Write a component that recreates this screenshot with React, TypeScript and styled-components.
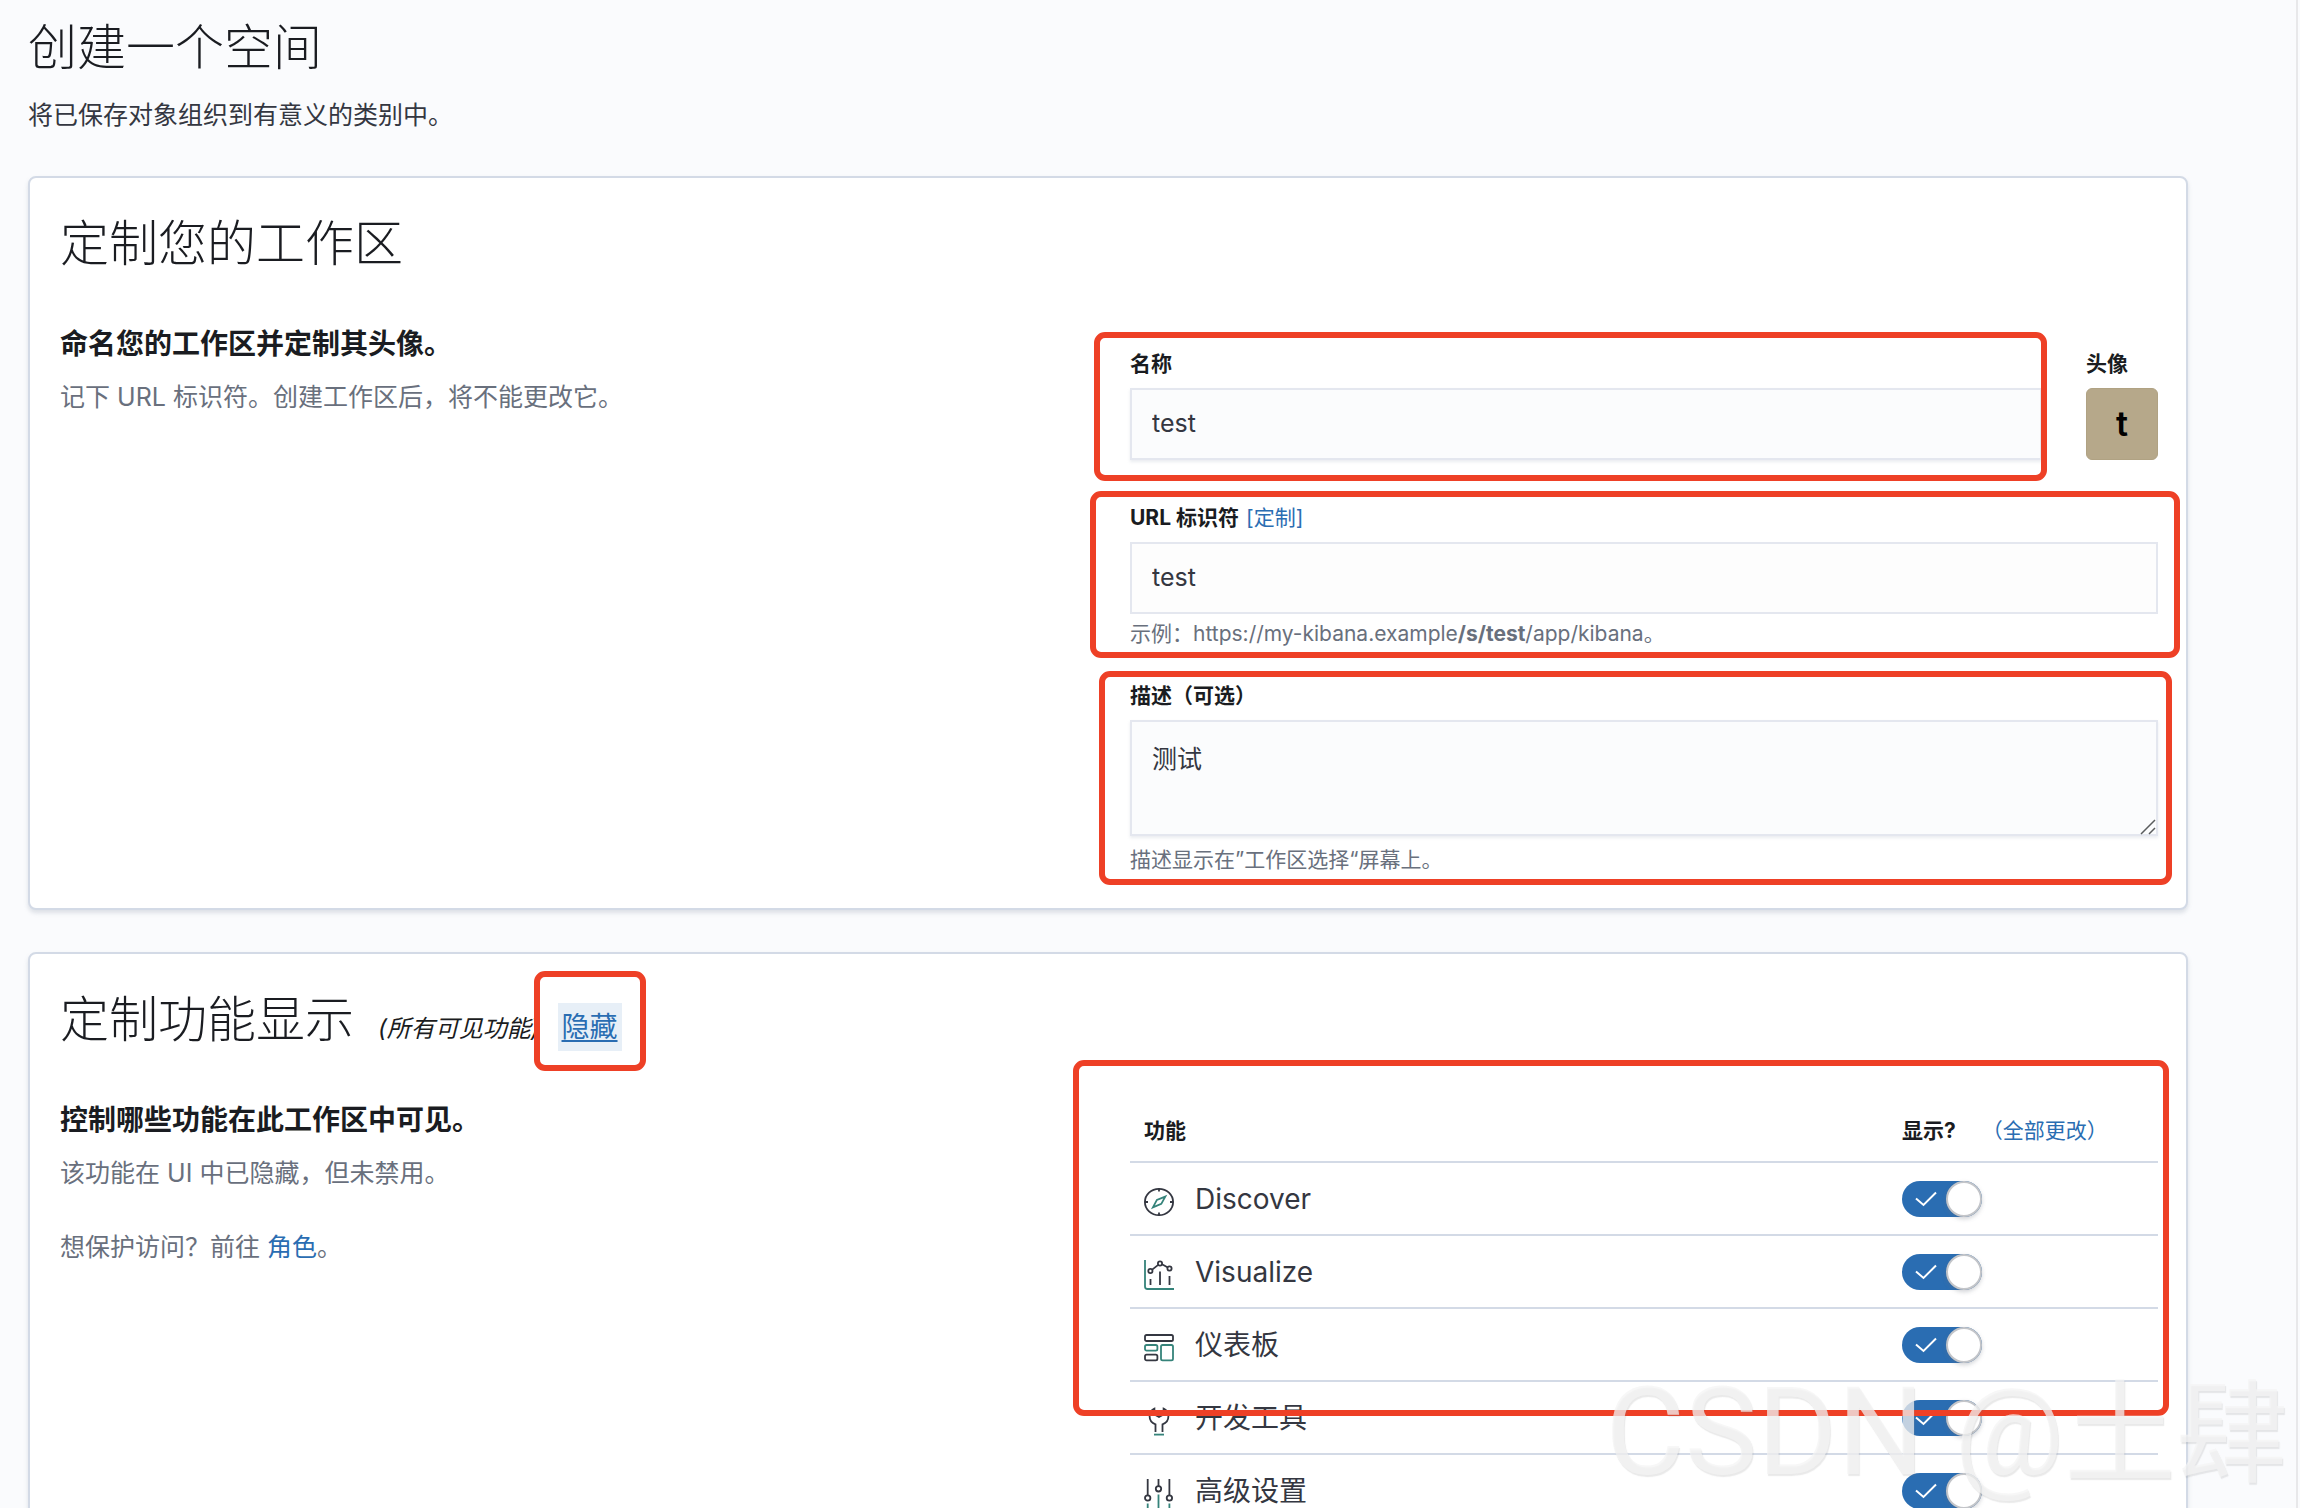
import React, { useId, useState } from 'react';
import styled, { createGlobalStyle, css } from 'styled-components';

const ink = '#1a1c21';
const text = '#343741';
const subdued = '#69707d';
const link = '#2a6db2';
const line = '#d3dae6';
const green = '#35837a';
const red = '#ee4026';

const GlobalStyle = createGlobalStyle`
  * { box-sizing: border-box; }
  body {
    margin: 0;
    background: #fafbfd;
    color: ${text};
    font-family: Inter, 'Noto Sans CJK SC', sans-serif;
    font-size: 25px;
    line-height: 38px;
  }
  h1, h2, h3, p { margin: 0; }
`;

const Page = styled.main`
  position: relative;
  height: 100vh;
  overflow: hidden;
  margin-right: 2px;
  padding: 14px 108px 0 28px;
  border-right: 2px solid #e8e8ea;
`;

const thin = css`
  color: ${ink};
  font-family: 'Noto Sans CJK SC', sans-serif;
  font-size: 49px;
  font-weight: 300;
  line-height: 60px;
`;

const PageTitle = styled.h1`${thin}`;

const Intro = styled.p`
  margin-top: 22px;
`;

const Panel = styled.section`
  margin-top: 42px;
  padding: 32px 28px 34px 30px;
  background: #fff;
  border: 2px solid ${line};
  border-radius: 8px;
  box-shadow: 0 3px 4px rgba(152, 162, 179, 0.3);
`;

const PanelHeader = styled.header`
  display: flex;
  align-items: baseline;
  height: 60px;
  margin-bottom: 54px;
`;

const PanelTitle = styled.h2`${thin}`;

const Summary = styled.em`
  margin-left: 24px;
  color: ${ink};
  font-size: 24px;
`;

const Columns = styled.div`
  display: grid;
  grid-template-columns: minmax(0, 1fr) minmax(0, 1fr);
  gap: 42px;
`;

const SideTitle = styled.h3`
  color: ${ink};
  font-size: 28px;
  font-weight: 700;
  line-height: 40px;
`;

const Note = styled.p<{ $gap: number }>`
  margin-top: ${(p) => p.$gap}px;
  color: ${subdued};
`;

const Anchor = styled.a`
  color: ${link};
  text-decoration: none;
`;

const Form = styled.form`
  display: flex;
  flex-direction: column;
  gap: 34px;
  padding-top: 26px;
`;

const NameRow = styled.div`
  display: flex;
  gap: 44px;
  padding-bottom: 10px;
`;

const Marked = styled.div`
  position: relative;
  flex: 1;
  min-width: 0;
`;

const Mark = styled.span<{ $inset: string }>`
  position: absolute;
  z-index: 1;
  inset: ${(p) => p.$inset};
  border: 6px solid ${red};
  border-radius: 11px;
  pointer-events: none;
`;

const labelText = css`
  color: ${ink};
  font-size: 21px;
  font-weight: 700;
  line-height: 28px;
`;

const LabelRow = styled.div`
  ${labelText}
  display: flex;
  gap: 7px;
  margin-bottom: 10px;
`;

const TextButton = styled.button`
  padding: 0;
  border: 0;
  background: none;
  color: ${link};
  font: inherit;
  font-weight: 400;
  cursor: pointer;
`;

const HideButton = styled(TextButton)`
  padding: 0 4px;
  background: #e7eff7;
  font-size: 28px;
  line-height: 48px;
  text-decoration: underline;
  text-underline-offset: 3px;
`;

const HideSlot = styled.span`
  position: relative;
  margin-left: 18px;
`;

const control = css`
  display: block;
  width: 100%;
  padding: 0 20px 2px;
  border: 2px solid #e4e7ef;
  border-radius: 0;
  outline: 0;
  color: ${text};
  font: inherit;
`;

const Input = styled.input`
  ${control}
  height: 72px;
  background: #fbfcfd;
  box-shadow: 0 2px 3px rgba(152, 162, 179, 0.2);
  &:read-only {
    background: #fdfdfd;
    box-shadow: none;
  }
`;

const Area = styled.textarea`
  ${control}
  height: 116px;
  padding-top: 18px;
  background: #fbfcfd;
  box-shadow: 0 2px 3px rgba(152, 162, 179, 0.2);
  resize: none;
`;

const AreaBox = styled.div`
  position: relative;
  margin-bottom: 10px;
`;

const Grip = styled.svg`
  position: absolute;
  right: 2px;
  bottom: 1px;
`;

const Help = styled.p`
  margin-top: 6px;
  color: ${subdued};
  font-size: 21px;
  line-height: 28px;
`;

const Avatar = styled.div`
  display: grid;
  place-items: center;
  width: 72px;
  height: 72px;
  border: 1px solid #b0a283;
  border-radius: 6px;
  background: #b6a88a;
  color: #000;
  font-size: 34px;
  font-weight: 600;
`;

const TableBox = styled(Marked)`
  align-self: start;
`;

const Table = styled.table`
  width: 100%;
  border-spacing: 0;
  table-layout: fixed;
`;

const Head = styled.th<{ $width?: string }>`
  ${labelText}
  width: ${(p) => p.$width ?? 'auto'};
  height: 63px;
  padding: 0 14px;
  border-bottom: 2px solid ${line};
  text-align: left;
`;

const HeadLine = styled.div`
  display: flex;
  gap: 26px;
`;

const Cell = styled.td`
  height: 73px;
  padding: 0 14px;
  border-bottom: 2px solid ${line};
`;

const Feature = styled.label`
  display: flex;
  align-items: center;
  gap: 21px;
  font-size: 28px;
`;

const Icon = styled.svg`
  flex: none;
  width: 30px;
  height: 36px;
  padding-top: 6px;
  fill: none;
  stroke: ${text};
  stroke-width: 1.8;
`;

const SwitchBox = styled.span`
  display: grid;
  align-items: center;
  width: 80px;
  height: 36px;
  & > * { grid-area: 1 / 1; }
`;

const SwitchInput = styled.input`
  appearance: none;
  width: 80px;
  height: 36px;
  margin: 0;
  border-radius: 18px;
  background: ${subdued};
  &:checked { background: ${link}; }
`;

const Tick = styled.svg`
  margin-left: 13px;
  pointer-events: none;
`;

const Thumb = styled.span<{ $on: boolean }>`
  justify-self: ${(p) => (p.$on ? 'end' : 'start')};
  width: 36px;
  height: 36px;
  border: 2px solid #c3c5c9;
  border-radius: 50%;
  background: #fff;
  box-shadow: 0 2px 4px rgba(105, 112, 125, 0.3);
  pointer-events: none;
`;

const Watermark = styled.div`
  position: absolute;
  z-index: 2;
  right: 8px;
  bottom: 0;
  color: rgba(244, 244, 244, 0.74);
  font-family: Roboto, 'Noto Sans CJK SC', sans-serif;
  font-size: 122px;
  line-height: 144px;
  white-space: nowrap;
  text-shadow: 1px 2px 1px rgba(120, 120, 120, 0.16);
  pointer-events: none;
`;

const WatermarkName = styled.span`
  font-size: 112px;
`;

const icons: Record<string, React.ReactNode> = {
  discover: (
    <>
      <ellipse cx="15" cy="15" rx="14.1" ry="13.2" />
      <path d="M15 1.5v3M15 25.5v3M1 15h3M26 15h3" />
      <path stroke={green} d="M21.3 9.6 17.3 16.9 8.9 20.4 12.9 12.9z" />
    </>
  ),
  visualize: (
    <>
      <path stroke={green} d="M1 0v26.5Q1 29 3.5 29H30" />
      <path d="M6.5 19v6M16 11.5v13.5M25.5 16v9M8.2 9.6 14.2 4.9M18 4.3 23.4 7.3" />
      <circle cx="6.4" cy="11" r="2.1" />
      <circle cx="16" cy="3.5" r="2.1" />
      <circle cx="25.5" cy="8.5" r="2.1" />
    </>
  ),
  dashboard: (
    <>
      <rect x="1" y="2" width="28" height="6" rx="1.6" />
      <rect x="1" y="21.7" width="12.4" height="5.6" rx="1.6" />
      <rect stroke={green} x="1" y="12" width="12.4" height="5.6" rx="1.6" />
      <rect stroke={green} x="17" y="12" width="12" height="15.3" rx="1.6" />
    </>
  ),
  devtools: (
    <>
      <path d="M11.5 26V18.3C7.6 16.9 5.6 13.8 5.6 10.2 5.6 7 7.2 4.1 10.4 2.6V8.4L15 11 19.6 8.4V2.6C22.8 4.1 24.4 7 24.4 10.2 24.4 13.8 22.4 16.9 18.5 18.3V26" />
      <path stroke={green} d="M10 28.6H20" />
    </>
  ),
  settings: (
    <>
      <path d="M3.7 0v16.2M14.5 0v7M25.4 0v16.2" />
      <circle cx="3.7" cy="19" r="2.7" />
      <circle cx="14.5" cy="9.8" r="2.7" />
      <circle cx="25.4" cy="19" r="2.7" />
      <path stroke={green} d="M3.7 24.5V30M14.5 15.5V30M25.4 24.5V30" />
    </>
  ),
};

const features = [
  { icon: 'discover', name: 'Discover' },
  { icon: 'visualize', name: 'Visualize' },
  { icon: 'dashboard', name: '仪表板' },
  { icon: 'devtools', name: '开发工具' },
  { icon: 'settings', name: '高级设置' },
];

function FeatureRow({ icon, name }: { icon: string; name: string }) {
  const id = useId();
  const [on, setOn] = useState(true);
  return (
    <tr>
      <Cell>
        <Feature htmlFor={id}>
          <Icon viewBox="0 0 30 30" aria-hidden="true">{icons[icon]}</Icon>
          {name}
        </Feature>
      </Cell>
      <Cell>
        <SwitchBox>
          <SwitchInput
            id={id}
            type="checkbox"
            role="switch"
            checked={on}
            onChange={(e) => setOn(e.target.checked)}
          />
          {on && (
            <Tick width="22" height="16" viewBox="0 0 22 16" fill="none" stroke="#fff" strokeWidth="2" aria-hidden="true">
              <path d="M1 7.5 8.5 14 21 1.5" />
            </Tick>
          )}
          <Thumb $on={on} />
        </SwitchBox>
      </Cell>
    </tr>
  );
}

export default function App() {
  return (
    <>
      <GlobalStyle />
      <Page lang="zh-CN">
        <PageTitle>创建一个空间</PageTitle>
        <Intro>将已保存对象组织到有意义的类别中。</Intro>

        <Panel>
          <PanelHeader>
            <PanelTitle>定制您的工作区</PanelTitle>
          </PanelHeader>
          <Columns>
            <div>
              <SideTitle>命名您的工作区并定制其头像。</SideTitle>
              <Note $gap={14}>记下 URL 标识符。创建工作区后，将不能更改它。</Note>
            </div>
            <Form>
              <NameRow>
                <Marked>
                  <LabelRow><label htmlFor="name">名称</label></LabelRow>
                  <Input id="name" defaultValue="test" />
                  <Mark $inset="-18px -5px -21px -36px" />
                </Marked>
                <div>
                  <LabelRow>头像</LabelRow>
                  <Avatar>t</Avatar>
                </div>
              </NameRow>
              <Marked>
                <LabelRow>
                  <label htmlFor="identifier">URL 标识符</label>
                  <TextButton type="button">[定制]</TextButton>
                </LabelRow>
                <Input id="identifier" defaultValue="test" readOnly />
                <Help>
                  示例：https://my-kibana.example<strong>/s/test</strong>/app/kibana。
                </Help>
                <Mark $inset="-13px -22px -10px -40px" />
              </Marked>
              <Marked>
                <LabelRow><label htmlFor="description">描述（可选）</label></LabelRow>
                <AreaBox>
                  <Area id="description" defaultValue="测试" />
                  <Grip width="16" height="16" viewBox="0 0 16 16" fill="none" stroke="#5a5c5e" strokeWidth="1.5" aria-hidden="true">
                    <path d="M1 15 15 1M9 15l6-6" />
                  </Grip>
                </AreaBox>
                <Help>描述显示在”工作区选择“屏幕上。</Help>
                <Mark $inset="-11px -14px -11px -31px" />
              </Marked>
            </Form>
          </Columns>
        </Panel>

        <Panel>
          <PanelHeader>
            <PanelTitle>定制功能显示</PanelTitle>
            <Summary>(所有可见功能)</Summary>
            <HideSlot>
              <HideButton type="button">隐藏</HideButton>
              <Mark $inset="-32px -24px -20px -24px" />
            </HideSlot>
          </PanelHeader>
          <Columns>
            <div>
              <SideTitle>控制哪些功能在此工作区中可见。</SideTitle>
              <Note $gap={14}>该功能在 UI 中已隐藏，但未禁用。</Note>
              <Note $gap={36}>想保护访问？前往 <Anchor href="#roles">角色</Anchor>。</Note>
            </div>
            <TableBox>
              <Table>
                <thead>
                  <tr>
                    <Head scope="col">功能</Head>
                    <Head scope="col" $width="270px">
                      <HeadLine>
                        显示?
                        <TextButton type="button">（全部更改）</TextButton>
                      </HeadLine>
                    </Head>
                  </tr>
                </thead>
                <tbody>
                  {features.map((f) => <FeatureRow key={f.icon} {...f} />)}
                </tbody>
              </Table>
              <Mark $inset="-40px -11px 112px -57px" />
            </TableBox>
          </Columns>
        </Panel>

        <Watermark aria-hidden="true">
          CSDN @<WatermarkName>土肆</WatermarkName>
        </Watermark>
      </Page>
    </>
  );
}
